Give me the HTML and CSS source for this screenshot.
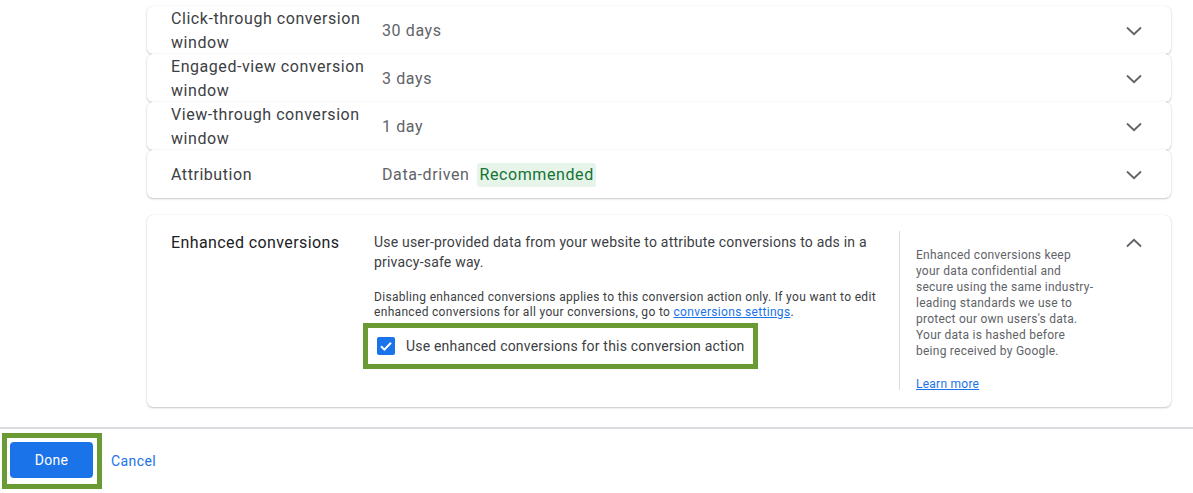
FILE: index.html
```html
<!DOCTYPE html>
<html lang="en">
<head>
<meta charset="utf-8">
<title>Conversion settings</title>
<link rel="stylesheet" href="styles.css">
</head>
<body>
<div class="page">
  <div class="settings">
    <div class="row">
      <div class="row-label">Click-through conversion window</div>
      <div class="row-value">30 days</div>
      <svg class="chev" viewBox="0 0 16 10"><polyline points="1,1.5 8,8.2 15,1.5"/></svg>
    </div>
    <div class="row">
      <div class="row-label">Engaged-view conversion window</div>
      <div class="row-value">3 days</div>
      <svg class="chev" viewBox="0 0 16 10"><polyline points="1,1.5 8,8.2 15,1.5"/></svg>
    </div>
    <div class="row">
      <div class="row-label">View-through conversion window</div>
      <div class="row-value">1 day</div>
      <svg class="chev" viewBox="0 0 16 10"><polyline points="1,1.5 8,8.2 15,1.5"/></svg>
    </div>
    <div class="row">
      <div class="row-label">Attribution</div>
      <div class="row-value">Data-driven <span class="chip">Recommended</span></div>
      <svg class="chev" viewBox="0 0 16 10"><polyline points="1,1.5 8,8.2 15,1.5"/></svg>
    </div>

    <div class="ec-card">
      <div class="ec-label">Enhanced conversions</div>
      <div class="ec-main">
        <p class="ec-desc">Use user-provided data from your website to attribute conversions to ads in a privacy-safe way.</p>
        <p class="ec-note">Disabling enhanced conversions applies to this conversion action only. If you want to edit enhanced conversions for all your conversions, go to <a href="#" class="link">conversions settings</a>.</p>
        <div class="highlight cb-box">
          <span class="checkbox"><svg viewBox="0 0 18 18"><polyline points="4,9.3 7.4,12.6 14,5.8"/></svg></span>
          <span class="cb-text">Use enhanced conversions for this conversion action</span>
        </div>
      </div>
      <div class="ec-side">
        <p>Enhanced conversions keep your data confidential and secure using the same industry-leading standards we use to protect our own users's data. Your data is hashed before being received by Google.</p>
        <a href="#" class="link">Learn more</a>
      </div>
      <svg class="chev chev-up" viewBox="0 0 16 10"><polyline points="1,8.5 8,1.8 15,8.5"/></svg>
    </div>
  </div>

  <div class="footer">
    <div class="highlight done-box"><button class="btn-done">Done</button></div>
    <a href="#" class="cancel">Cancel</a>
  </div>
</div>
</body>
</html>
```
FILE: styles.css
```css
* { box-sizing: border-box; }
html, body { margin: 0; padding: 0; background: #fff; }
body {
  font-family: Roboto, "Liberation Sans", Arial, sans-serif;
  color: #3c4043;
  width: 1193px;
  height: 493px;
  overflow: hidden;
}
p { margin: 0; }
.page { display: flex; flex-direction: column; }

.settings {
  padding: 6px 22px 0 147px;
  display: flex;
  flex-direction: column;
}

.row {
  height: 48px;
  display: flex;
  align-items: center;
  padding: 2px 29px 0 24px;
  border-radius: 6px;
  background: #fff;
  box-shadow: 0 1px 2px rgba(60,64,67,.28), 0 0 1px rgba(60,64,67,.2);
}
.row-label {
  width: 211px;
  flex: none;
  font-size: 16px;
  line-height: 24px;
  color: #3c4043;
  letter-spacing: 0.55px;
  padding-right: 6px;
}
.row-value {
  flex: 1;
  font-size: 16px;
  line-height: 24px;
  color: #5f6368;
  letter-spacing: 0.6px;
  display: flex;
  align-items: center;
  gap: 8px;
}
.chip {
  background: #e6f4ea;
  color: #137333;
  padding: 0 2px;
  line-height: 24px;
  border-radius: 3px;
}

.chev {
  width: 16px;
  height: 10px;
  flex: none;
  fill: none;
  stroke: #5f6368;
  stroke-width: 1.8;
}

.ec-card {
  margin-top: 17px;
  height: 192px;
  border-radius: 6px;
  background: #fff;
  box-shadow: 0 1px 2px rgba(60,64,67,.28), 0 0 1px rgba(60,64,67,.2);
  display: flex;
  align-items: flex-start;
  padding: 16px 29px 17px 24px;
}
.ec-label {
  width: 203px;
  flex: none;
  font-size: 16px;
  line-height: 24px;
  color: #202124;
  letter-spacing: 0.4px;
}
.ec-main {
  width: 525px;
  flex: none;
  padding-right: 4px;
  padding-top: 1px;
}
.ec-desc {
  font-size: 14px;
  line-height: 20px;
  color: #3c4043;
  letter-spacing: 0.2px;
}
.ec-note {
  margin-top: 18px;
  font-size: 12px;
  line-height: 15px;
  color: #3c4043;
  letter-spacing: 0.32px;
}
.link { color: #1a73e8; text-decoration: underline; }

.highlight { border: 5px solid #6a9a34; }
.cb-box {
  margin-top: 3px;
  margin-left: -11px;
  width: 395px;
  height: 46px;
  display: flex;
  align-items: center;
  padding-left: 9px;
}
.checkbox {
  width: 18px;
  height: 18px;
  background: #1a73e8;
  border-radius: 2px;
  display: inline-flex;
  flex: none;
}
.checkbox svg {
  width: 18px; height: 18px;
  fill: none; stroke: #fff; stroke-width: 2;
}
.cb-text {
  margin-left: 11px;
  font-size: 14px;
  line-height: 20px;
  color: #3c4043;
  letter-spacing: 0.2px;
  white-space: nowrap;
}

.ec-side {
  align-self: stretch;
  width: 216px;
  flex: none;
  border-left: 1px solid #dadce0;
  padding: 16px 20px 0 16px;
  font-size: 12px;
  line-height: 16px;
  color: #5f6368;
  letter-spacing: 0.25px;
}
.ec-side p { margin-bottom: 17px; }
.chev-up { margin-left: auto; margin-top: 7px; }

.footer {
  margin-top: 20px;
  border-top: 2px solid #dadce0;
  display: flex;
  align-items: center;
  padding: 4px 0 0 2px;
}
.done-box {
  padding: 4px 4px 6px 3px;
}
.btn-done {
  width: 83px;
  height: 36px;
  border: none;
  border-radius: 4px;
  background: #1a73e8;
  color: #fff;
  font-family: Roboto, "Liberation Sans", Arial, sans-serif;
  font-size: 14px;
  letter-spacing: 0.3px;
  display: block;
}
.cancel {
  margin-left: 9px;
  color: #1a73e8;
  font-size: 14px;
  text-decoration: none;
  letter-spacing: 0.4px;
}
```
